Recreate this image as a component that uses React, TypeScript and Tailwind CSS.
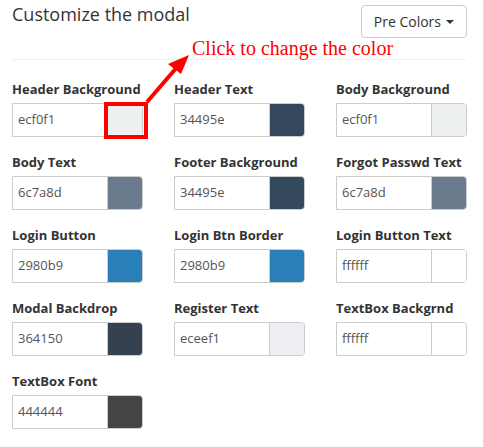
import React from "react";

const items: { label: string; value: string }[] = [
  { label: "Header Background", value: "ecf0f1" },
  { label: "Header Text", value: "34495e" },
  { label: "Body Background", value: "ecf0f1" },
  { label: "Body Text", value: "6c7a8d" },
  { label: "Footer Background", value: "34495e" },
  { label: "Forgot Passwd Text", value: "6c7a8d" },
  { label: "Login Button", value: "2980b9" },
  { label: "Login Btn Border", value: "2980b9" },
  { label: "Login Button Text", value: "ffffff" },
  { label: "Modal Backdrop", value: "364150" },
  { label: "Register Text", value: "eceef1" },
  { label: "TextBox Backgrnd", value: "ffffff" },
  { label: "TextBox Font", value: "444444" },
];

function Field({ label, value }: { label: string; value: string }) {
  return (
    <div className="flex flex-col">
      <div className="text-[13px] leading-[18px] font-bold text-[#333] mb-[5px] whitespace-nowrap">
        {label}
      </div>
      <div className="flex w-[131px] h-[34px] border border-[#ccc] rounded-r-[4px] overflow-hidden">
        <div className="w-[94px] flex items-center pl-[5px] text-[13px] text-[#555]">
          {value}
        </div>
        <div
          className="flex-1 border-l border-[#ccc]"
          style={{ backgroundColor: `#${value}` }}
        />
      </div>
    </div>
  );
}

export default function App() {
  return (
    <div
      className="relative w-[484px] h-[447px] bg-white border-r border-[#ddd] overflow-hidden"
      style={{ fontFamily: '"Open Sans", sans-serif' }}
    >
      <div className="pl-[12px] pr-[16px]">
        <div className="flex justify-between items-start h-[59px]">
          <div className="pt-[2px] text-[18px] leading-[24px] text-[#333]">
            Customize the modal
          </div>
          <button className="mt-[5px] h-[33px] px-[12px] flex items-center border border-[#ccc] rounded-[4px] bg-white text-[14px] text-[#333]">
            Pre Colors
            <span className="ml-[5px] inline-block w-0 h-0 border-l-[4px] border-r-[4px] border-t-[4px] border-l-transparent border-r-transparent border-t-[#333]" />
          </button>
        </div>
        <div className="h-px bg-[#eee] mr-[1px]" />
        <div className="mt-[20px] grid grid-cols-[131px_131px_131px] gap-x-[31px] gap-y-[16px]">
          {items.map((it) => (
            <Field key={it.label} label={it.label} value={it.value} />
          ))}
        </div>
      </div>

      <div
        className="absolute left-[192px] top-[36px] text-[20px] leading-[24px] text-[#ff0000] whitespace-nowrap"
        style={{ fontFamily: '"Liberation Serif", serif' }}
      >
        Click to change the color
      </div>
      <svg
        className="absolute left-0 top-0 pointer-events-none"
        width="484"
        height="447"
        viewBox="0 0 484 447"
      >
        <rect x="106" y="104" width="40" height="33" fill="none" stroke="#ff0000" strokeWidth="4" />
        <line x1="147" y1="102" x2="178" y2="66" stroke="#ff0000" strokeWidth="4" />
        <polygon points="189,55 168,64 181,74" fill="#ff0000" />
      </svg>
    </div>
  );
}
